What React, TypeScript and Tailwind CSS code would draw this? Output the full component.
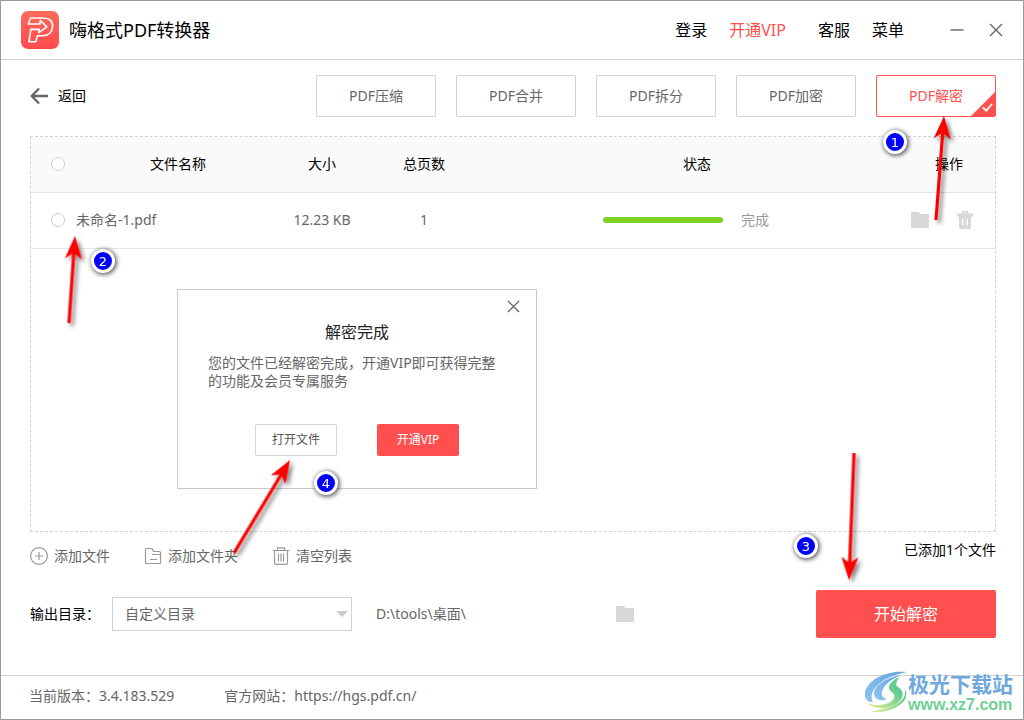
import { useState } from 'react'
import type { ReactNode } from 'react'

const TOOLS = ['PDF压缩', 'PDF合并', 'PDF拆分', 'PDF加密', 'PDF解密']

// tail and tip of every guide arrow
const ARROWS = [
  { from: [935, 219], to: [943, 115] },
  { from: [68, 322], to: [74, 235] },
  { from: [853, 452], to: [848, 579] },
  { from: [233, 552], to: [289, 459] },
]

function Logo() {
  return (
    <svg width="38" height="38" viewBox="0 0 38 38" fill="none" aria-hidden="true">
      <defs>
        <linearGradient id="logo-bg" x1="0" y1="0" x2="0" y2="1">
          <stop offset="0" stopColor="#ff6a5c" />
          <stop offset="1" stopColor="#ff4b4e" />
        </linearGradient>
      </defs>
      <rect width="38" height="38" rx="7" fill="url(#logo-bg)" />
      <path
        d="M9.6 7H22.5C28.6 7 32 10.4 31.6 15.4C31.2 21 27.4 24.8 21.6 24.8H16.3L14.8 30.8H8L9.8 18.4H18.3L17.8 21.6L25.8 15.9L19.4 9.6L18.8 13H7.2Z"
        stroke="#fff"
        strokeWidth="1.6"
        strokeLinejoin="round"
      />
    </svg>
  )
}

function CloseIcon({ size }: { size: number }) {
  return (
    <svg width={size} height={size} viewBox="0 0 14 14" fill="none" stroke="#666" strokeWidth="1.4" aria-hidden="true">
      <path d="M1 1L13 13M13 1L1 13" />
    </svg>
  )
}

function FolderIcon() {
  return (
    <svg width="18" height="16" viewBox="0 0 18 16" fill="#d8d8d8" aria-hidden="true">
      <path d="M1 0H7.2C7.8 0 8.2 .4 8.5 .9L9.1 2H17C17.6 2 18 2.4 18 3V15C18 15.6 17.6 16 17 16H1C.4 16 0 15.6 0 15V1C0 .4 .4 0 1 0Z" />
    </svg>
  )
}

function TrashIcon() {
  return (
    <svg width="16" height="18" viewBox="0 0 16 18" fill="#d8d8d8" aria-hidden="true">
      <path
        fillRule="evenodd"
        d="M5 2.5V1C5 .4 5.4 0 6 0H10C10.6 0 11 .4 11 1V2.5H15.3C15.7 2.5 16 2.8 16 3.2V5C16 5.4 15.7 5.7 15.3 5.7H14V16.5C14 17.3 13.3 18 12.5 18H3.5C2.7 18 2 17.3 2 16.5V5.7H.7C.3 5.7 0 5.4 0 5V3.2C0 2.8 .3 2.5 .7 2.5ZM6.5 2.5H9.5V1.5H6.5ZM5 8V14.5H6.4V8ZM9.6 8V14.5H11V8Z"
      />
    </svg>
  )
}

function ToolLink({ icon, children }: { icon: ReactNode; children: ReactNode }) {
  return (
    <button className="flex items-center gap-1.5 text-[#666]">
      <svg width="18" height="18" viewBox="0 0 18 18" fill="none" stroke="#999" strokeWidth="1.2" strokeLinejoin="round" aria-hidden="true">
        {icon}
      </svg>
      {children}
    </button>
  )
}

function RoundCheck({ label }: { label: string }) {
  return (
    <input
      type="checkbox"
      aria-label={label}
      className="block size-3.5 appearance-none rounded-full border border-[#ccc] bg-white checked:bg-[#ff4f4f]"
    />
  )
}

function DoneDialog({ onClose }: { onClose: () => void }) {
  return (
    <div
      role="dialog"
      aria-labelledby="done-title"
      className="absolute top-[152px] left-[146px] w-[360px] border border-[#c8c8c8] bg-white px-[30px] pt-[30px] pb-8"
    >
      <button onClick={onClose} aria-label="关闭" className="absolute top-2.5 right-4">
        <CloseIcon size={13} />
      </button>
      <h2 id="done-title" className="text-center text-base leading-6 text-[#222]">解密完成</h2>
      <p className="mt-2.5 text-sm leading-[18px] text-[#666]">
        您的文件已经解密完成，开通VIP即可获得完整的功能及会员专属服务
      </p>
      <div className="mt-[34px] flex justify-center gap-10 text-xs">
        <button className="h-8 w-[82px] rounded-xs border border-[#d6d6d6] text-[#555]">打开文件</button>
        <button className="h-8 w-[82px] rounded-xs bg-[#ff4f4f] text-white">开通VIP</button>
      </div>
    </div>
  )
}

function Arrows() {
  return (
    <svg className="pointer-events-none absolute top-0 left-0" width="1022" height="718" viewBox="0 0 1022 718" aria-hidden="true">
      <defs>
        <filter id="arrow-shadow" filterUnits="userSpaceOnUse" x="0" y="0" width="1022" height="718">
          <feDropShadow dx="3" dy="3" stdDeviation="2" floodColor="#000" floodOpacity="0.5" />
        </filter>
      </defs>
      <g fill="#f00" filter="url(#arrow-shadow)">
        {ARROWS.map(({ from, to }, i) => {
          const dx = to[0] - from[0]
          const dy = to[1] - from[1]
          const len = Math.hypot(dx, dy)
          const angle = (Math.atan2(dx, -dy) * 180) / Math.PI
          return (
            <path
              key={i}
              transform={`translate(${to[0]} ${to[1]}) rotate(${angle})`}
              d={`M0 0L8.5 23L1.6 18V${len}H-1.6V18L-8.5 23Z`}
            />
          )
        })}
      </g>
    </svg>
  )
}

function Step({ n, className }: { n: number; className: string }) {
  return (
    <span
      className={`absolute flex size-6 items-center justify-center rounded-full border-[3px] border-white bg-[#0000fe] font-['DejaVu_Sans'] text-[13px] leading-none text-white shadow-[1px_1px_4px_1px_rgba(0,0,0,0.6)] ${className}`}
    >
      {n}
    </span>
  )
}

function Watermark() {
  return (
    <div className="pointer-events-none absolute right-2.5 bottom-1.5 flex items-center gap-px">
      <svg width="42" height="42" viewBox="0 0 42 42" aria-hidden="true">
        <defs>
          <linearGradient id="wm-blue" x1="1" y1="0" x2="0" y2="1">
            <stop offset="0" stopColor="#62a6e0" />
            <stop offset="1" stopColor="#8cc2ee" />
          </linearGradient>
          <linearGradient id="wm-green" x1="1" y1="0" x2="0" y2="1">
            <stop offset="0.3" stopColor="#62cb92" />
            <stop offset="1" stopColor="#eaee90" />
          </linearGradient>
        </defs>
        <path d="M42 1C24 -1 4 7 0 21C-1 27 2 31 8 31C3 23 11 7 42 1Z" fill="url(#wm-blue)" />
        <path d="M37 4C22 6 10 14 9 22C9 28 15 31 22 28C17 27 15 23 18 18C21 12 28 7 37 4Z" fill="url(#wm-blue)" />
        <path d="M35 6C27 9 23 14 24 18C26 22 31 22 29 27C26 34 12 36 2 32C9 39 26 39 34 31C40 25 38 19 33 16C30 14 31 10 35 6Z" fill="url(#wm-green)" />
        <path d="M37 15C42 18 41 25 36 30C28 38 14 38 5 41C16 42 29 39 36 33C43 27 43 19 37 15Z" fill="url(#wm-green)" />
      </svg>
      <div>
        <p className="text-[21px] leading-[26px] font-bold text-[#6fa8dc]">极光下载站</p>
        <p className="font-['Liberation_Sans'] text-base leading-4 font-bold text-[#70cf94]">www.xz7.com</p>
      </div>
    </div>
  )
}

export default function App() {
  const [active, setActive] = useState('PDF解密')
  const [dialogOpen, setDialogOpen] = useState(true)

  return (
    <div className="relative flex min-h-screen flex-col border border-[#999] bg-white font-['Noto_Sans','Noto_Sans_CJK_SC',sans-serif] text-sm text-black">
      {/* Title bar */}
      <header className="flex h-[59px] items-center border-b border-[#d2d2d2] px-5">
        <Logo />
        <h1 className="ml-2.5 text-lg">嗨格式PDF转换器</h1>
        <nav className="ml-auto flex items-center gap-[22px] text-base">
          <button>登录</button>
          <button className="mr-2.5 text-[#ff4f4f]">开通VIP</button>
          <button>客服</button>
          <button>菜单</button>
        </nav>
        <div className="ml-[46px] flex items-center gap-[25px]">
          <button aria-label="最小化">
            <svg width="14" height="14" viewBox="0 0 14 14" stroke="#666" strokeWidth="1.4" aria-hidden="true">
              <path d="M0.5 7H13.5" />
            </svg>
          </button>
          <button aria-label="关闭窗口">
            <CloseIcon size={14} />
          </button>
        </div>
      </header>

      <main className="flex flex-1 flex-col pr-[27px] pl-[29px]">
        {/* Tools */}
        <div className="mt-[15px] flex h-[42px] items-center justify-between">
          <button className="flex items-center gap-2.5">
            <svg width="18" height="18" viewBox="0 0 18 18" fill="none" stroke="#666" strokeWidth="2.4" aria-hidden="true">
              <path d="M9 1.5L1.8 9L9 16.5M2 9H18" />
            </svg>
            返回
          </button>
          <div className="flex gap-5">
            {TOOLS.map(t => (
              <button
                key={t}
                onClick={() => setActive(t)}
                className={`relative h-[42px] w-[120px] rounded-xs border ${t === active ? 'border-[#ff4f4f] text-[#ff4f4f]' : 'border-[#d2d2d2] text-[#666]'}`}
              >
                {t}
                {t === active && (
                  <svg className="absolute right-0 bottom-0" width="24" height="24" viewBox="0 0 24 24" aria-hidden="true">
                    <path d="M24 0V24H0Z" fill="#ff4f4f" />
                    <path d="M12 15.5L15.2 18.7L21 12" fill="none" stroke="#fff" strokeWidth="1.8" />
                  </svg>
                )}
              </button>
            ))}
          </div>
        </div>

        {/* File list */}
        <section className="relative mt-[19px] flex-1 border border-dashed border-[#d2d2d2]">
          <table className="w-full table-fixed">
            <colgroup>
              <col className="w-[38px]" />
              <col className="w-[218px]" />
              <col className="w-[70px]" />
              <col className="w-[134px]" />
              <col />
              <col className="w-[92px]" />
            </colgroup>
            <thead>
              <tr className="h-[55px] border-b border-[#e6e6e6] bg-[#fafafa]">
                <th className="pl-5"><RoundCheck label="全选" /></th>
                <th className="font-normal">文件名称</th>
                <th className="font-normal">大小</th>
                <th className="font-normal">总页数</th>
                <th className="font-normal">状态</th>
                <th className="font-normal">操作</th>
              </tr>
            </thead>
            <tbody>
              <tr className="h-14 border-b border-[#e6e6e6] text-center text-[#666]">
                <td className="pl-5"><RoundCheck label="未命名-1.pdf" /></td>
                <td className="pl-[7px] text-left">未命名-1.pdf</td>
                <td className="whitespace-nowrap">12.23 KB</td>
                <td>1</td>
                <td>
                  <div className="flex items-center gap-[18px] pl-28">
                    <div className="h-1.5 w-[120px] rounded-full bg-[#7ed321]" />
                    <span className="text-[#999]">完成</span>
                  </div>
                </td>
                <td>
                  <div className="flex items-center gap-7 pl-2">
                    <button aria-label="打开文件夹"><FolderIcon /></button>
                    <button aria-label="删除"><TrashIcon /></button>
                  </div>
                </td>
              </tr>
            </tbody>
          </table>
          {dialogOpen && <DoneDialog onClose={() => setDialogOpen(false)} />}
        </section>

        {/* List actions */}
        <div className="flex h-12 items-center gap-[34px]">
          <ToolLink
            icon={
              <>
                <circle cx="9" cy="9" r="8.4" />
                <path d="M9 5V13M5 9H13" />
              </>
            }
          >
            添加文件
          </ToolLink>
          <ToolLink icon={<path d="M2.5 1.5H8L9.5 4.5H15.5Q16.5 4.5 16.5 5.5V15.5Q16.5 16.5 15.5 16.5H2.5Q1.5 16.5 1.5 15.5V2.5Q1.5 1.5 2.5 1.5ZM8 7.5H16.5M6 12.5H13" />}>
            添加文件夹
          </ToolLink>
          <ToolLink icon={<path d="M0.5 3.5H17.5M5.5 3.5V0.8H12.5V3.5M2.5 3.5V16Q2.5 17.4 3.9 17.4H14.1Q15.5 17.4 15.5 16V3.5M6.5 6.5V14.5M9 6.5V14.5M11.5 6.5V14.5" />}>
            清空列表
          </ToolLink>
          <p className="ml-auto self-start pt-2">已添加1个文件</p>
        </div>

        {/* Output */}
        <div className="mt-2.5 mb-[37px] flex h-12 items-center">
          <label htmlFor="output-dir" className="w-[82px]">输出目录：</label>
          <div className="relative w-60">
            <select
              id="output-dir"
              className="h-[34px] w-full appearance-none border border-[#d2d2d2] bg-white pl-3 text-[#666]"
            >
              <option>自定义目录</option>
              <option>原文件目录</option>
            </select>
            <svg className="pointer-events-none absolute top-3.5 right-1" width="12" height="6" viewBox="0 0 12 6" fill="#ccc" aria-hidden="true">
              <path d="M0 0H12L6 6Z" />
            </svg>
          </div>
          <span className="ml-6 w-60 text-[#666]">D:\tools\桌面\</span>
          <button aria-label="选择目录"><FolderIcon /></button>
          <button className="ml-auto h-12 w-[180px] rounded-xs bg-[#ff4f4f] text-base text-white">开始解密</button>
        </div>
      </main>

      <footer className="flex h-11 items-center gap-[50px] border-t border-[#d2d2d2] px-7 pb-1 text-[#666]">
        <span>当前版本：3.4.183.529</span>
        <span>官方网站：<a href="https://hgs.pdf.cn/">https://hgs.pdf.cn/</a></span>
      </footer>

      <Watermark />
      <Arrows />
      <Step n={1} className="top-[129px] left-[882px]" />
      <Step n={2} className="top-[248px] left-[90px]" />
      <Step n={3} className="top-[533px] left-[793px]" />
      <Step n={4} className="top-[470px] left-[313px]" />
    </div>
  )
}
